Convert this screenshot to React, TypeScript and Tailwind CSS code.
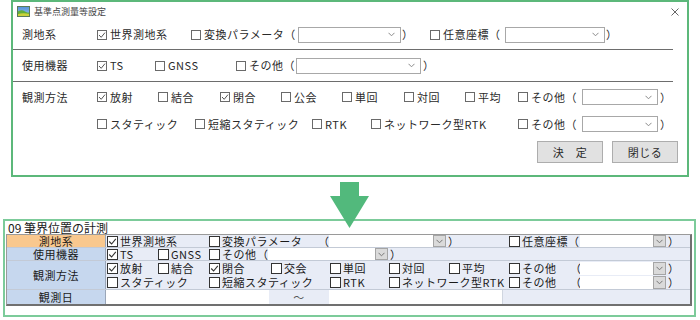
import React from "react";

function CbTop({ checked }: { checked?: boolean }) {
  return (
    <svg width="10" height="10" viewBox="0 0 10 10" className="shrink-0">
      <rect x="0.5" y="0.5" width="9" height="9" fill="#fff" stroke="#6a6a6a" />
      {checked && <path d="M2 5 L4.2 7.3 L8 2.6" fill="none" stroke="#555" strokeWidth="1" />}
    </svg>
  );
}

function CbB({ checked }: { checked?: boolean }) {
  return (
    <svg width="11" height="11" viewBox="0 0 11 11" className="shrink-0">
      <rect x="0.5" y="0.5" width="10" height="10" fill="#fff" stroke="#333" />
      {checked && <path d="M2.2 5.5 L4.6 8 L8.8 2.8" fill="none" stroke="#333" strokeWidth="1.1" />}
    </svg>
  );
}

function Chev({ color }: { color: string }) {
  return (
    <svg width="7" height="5" viewBox="0 0 7 5">
      <path d="M0.5 0.8 L3.5 3.8 L6.5 0.8" fill="none" stroke={color} strokeWidth="1" />
    </svg>
  );
}

function OptT({ checked, w, children }: { checked?: boolean; w: string; children: React.ReactNode }) {
  return (
    <div className={"flex items-center shrink-0 whitespace-nowrap " + w}>
      <CbTop checked={checked} />
      <span className="ml-[3px]">{children}</span>
    </div>
  );
}

function ComboT({ w }: { w: string }) {
  return (
    <div className={"h-[16px] shrink-0 border border-[#a8a8a8] bg-white flex items-center justify-end pr-[5px] " + w}>
      <Chev color="#8a8a8a" />
    </div>
  );
}

function OptB({ checked, w, children }: { checked?: boolean; w: string; children: React.ReactNode }) {
  return (
    <div className={"flex items-center shrink-0 whitespace-nowrap " + w}>
      <CbB checked={checked} />
      <span className="ml-[2px]">{children}</span>
    </div>
  );
}

function ComboB({ w, h }: { w: string; h: string }) {
  return (
    <>
      <div className={"bg-white shrink-0 " + w + " " + h}></div>
      <div className={"w-[13px] shrink-0 bg-[#dadada] border border-[#a5a5a5] flex items-center justify-center " + h}>
        <Chev color="#777" />
      </div>
    </>
  );
}

function AppIcon() {
  return (
    <svg width="13" height="11" viewBox="0 0 13 11">
      <defs>
        <linearGradient id="sky" x1="0" y1="0" x2="0" y2="1">
          <stop offset="0" stopColor="#4f8fd8" />
          <stop offset="1" stopColor="#9cc8f0" />
        </linearGradient>
      </defs>
      <rect x="0" y="0" width="13" height="11" fill="url(#sky)" />
      <path d="M0 6 Q4 3 8 5.5 T13 5 L13 11 L0 11 Z" fill="#5fae3a" />
      <path d="M0 8.5 Q5 6.5 13 8 L13 11 L0 11 Z" fill="#c9d23a" />
      <rect x="0.5" y="0.5" width="12" height="10" fill="none" stroke="#5a7a5a" strokeWidth="1" />
    </svg>
  );
}

export default function App() {
  return (
    <div className="w-[700px] h-[320px] bg-white overflow-hidden font-['Noto_Sans_CJK_JP',sans-serif]">
      {/* Dialog */}
      <div className="ml-[11px] w-[678px] h-[177px] border-2 border-[#5cb87a] bg-white text-[11px] tracking-[0.5px] leading-none text-[#2a2a2a]">
        <div className="h-[18px] flex items-center pl-[4px] pr-[8px]">
          <AppIcon />
          <span className="ml-[4px] text-[9px] tracking-[0px] text-[#444]">基準点測量等設定</span>
          <div className="flex-1" />
          <svg width="8" height="8" viewBox="0 0 8 8" className="mt-[2px]">
            <path d="M0.5 0.5 L7.5 7.5 M7.5 0.5 L0.5 7.5" stroke="#666" strokeWidth="1" />
          </svg>
        </div>
        {/* Row 1 */}
        <div className="h-[29px] flex items-center pl-[9px]">
          <div className="w-[75px] shrink-0">測地系</div>
          <OptT checked w="w-[94px]">世界測地系</OptT>
          <OptT w="w-[107px]">変換パラメータ（</OptT>
          <ComboT w="w-[103px]" />
          <span className="w-[29px] shrink-0 pl-[1px]">）</span>
          <OptT w="w-[75px]">任意座標（</OptT>
          <ComboT w="w-[100px]" />
          <span className="pl-[1px]">）</span>
        </div>
        <div className="h-px bg-[#6d6d6d] mr-[14px]" />
        {/* Row 2 */}
        <div className="h-[31px] flex items-center pl-[9px]">
          <div className="w-[75px] shrink-0">使用機器</div>
          <OptT checked w="w-[58px]">TS</OptT>
          <OptT w="w-[81px]">GNSS</OptT>
          <OptT w="w-[60px]">その他（</OptT>
          <ComboT w="w-[125px]" />
          <span className="pl-[2px]">）</span>
        </div>
        <div className="h-px bg-[#6d6d6d] mr-[14px]" />
        {/* Row 3 */}
        <div className="h-[30px] flex items-center pl-[9px]">
          <div className="w-[75px] shrink-0">観測方法</div>
          <OptT checked w="w-[61px]">放射</OptT>
          <OptT w="w-[62px]">結合</OptT>
          <OptT checked w="w-[61px]">閉合</OptT>
          <OptT w="w-[61px]">公会</OptT>
          <OptT w="w-[62px]">単回</OptT>
          <OptT w="w-[61px]">対回</OptT>
          <OptT w="w-[53px]">平均</OptT>
          <OptT w="w-[64px]">その他（</OptT>
          <ComboT w="w-[76px]" />
          <span className="pl-[2px]">）</span>
        </div>
        {/* Row 4 */}
        <div className="h-[24px] flex items-center pl-[84px]">
          <OptT w="w-[98px]">スタティック</OptT>
          <OptT w="w-[117px]">短縮スタティック</OptT>
          <OptT w="w-[59px]">RTK</OptT>
          <OptT w="w-[147px]">ネットワーク型RTK</OptT>
          <OptT w="w-[64px]">その他（</OptT>
          <ComboT w="w-[76px]" />
          <span className="pl-[2px]">）</span>
        </div>
        {/* Buttons */}
        <div className="mt-[5px] flex justify-end gap-[9px] pr-[9px]">
          <div className="w-[66px] h-[22px] bg-[#e1e1e1] border border-[#adadad] flex items-center justify-center">決　定</div>
          <div className="w-[66px] h-[22px] bg-[#e1e1e1] border border-[#adadad] flex items-center justify-center">閉じる</div>
        </div>
      </div>

      {/* Arrow */}
      <div className="h-[42px] flex justify-center relative z-10">
        <svg width="40" height="46" viewBox="0 0 40 46" className="mt-[5px] shrink-0 overflow-visible">
          <path d="M10 0 L29 0 L29 14 L39 14 L19.5 46 L0 14 L10 14 Z" fill="#52b97c" />
        </svg>
      </div>

      {/* Bottom frame */}
      <div className="ml-[3px] w-[693px] h-[98px] border-2 border-[#7ccb9a] bg-white pl-px text-[11px] tracking-[0.5px] leading-none text-[#1a1a1a]">
        <div className="h-[13px] flex items-center pl-[2px] text-[12px] tracking-[0px]">09 筆界位置の計測</div>
        <div className="w-[686px] border-t border-l border-[#9a9a9a] border-r-2 border-r-[#707070] border-b-2 border-b-[#707070]">
          {/* r1 */}
          <div className="h-[13px] flex border-b border-[#c3cad6]">
            <div className="w-[99px] shrink-0 bg-[#f9c88e] border-r border-[#9aa6b8] flex items-center justify-center">測地系</div>
            <div className="flex-1 bg-[#e8ecf6] flex items-center pl-px">
              <OptB checked w="w-[102px]">世界測地系</OptB>
              <OptB w="w-[109px]">変換パラメータ</OptB>
              <span className="w-[11px] shrink-0">（</span>
              <ComboB w="w-[104px]" h="h-[12px]" />
              <span className="w-[63px] shrink-0 pl-[2px]">）</span>
              <OptB w="w-[59px]">任意座標</OptB>
              <span className="w-[12px] shrink-0">（</span>
              <ComboB w="w-[73px]" h="h-[12px]" />
              <span className="pl-[2px]">）</span>
            </div>
          </div>
          {/* r2 */}
          <div className="h-[13px] flex border-b border-[#c3cad6]">
            <div className="w-[99px] shrink-0 bg-[#c6d7ee] border-r border-[#9aa6b8] flex items-center justify-center">使用機器</div>
            <div className="flex-1 bg-[#e8ecf6] flex items-center pl-px">
              <OptB checked w="w-[51px]">TS</OptB>
              <OptB w="w-[51px]">GNSS</OptB>
              <OptB w="w-[48px]">その他</OptB>
              <span className="w-[11px] shrink-0">（</span>
              <ComboB w="w-[107px]" h="h-[12px]" />
              <span className="pl-[2px]">）</span>
            </div>
          </div>
          {/* r3 */}
          <div className="h-[29px] flex border-b border-[#c3cad6]">
            <div className="w-[99px] shrink-0 bg-[#c6d7ee] border-r border-[#9aa6b8] flex items-center justify-center">観測方法</div>
            <div className="flex-1 bg-[#e8ecf6] flex flex-col pl-px">
              <div className="h-[14px] flex items-center">
                <OptB checked w="w-[51px]">放射</OptB>
                <OptB w="w-[51px]">結合</OptB>
                <OptB checked w="w-[62px]">閉合</OptB>
                <OptB w="w-[59px]">交会</OptB>
                <OptB w="w-[59px]">単回</OptB>
                <OptB w="w-[60px]">対回</OptB>
                <OptB w="w-[60px]">平均</OptB>
                <OptB w="w-[61px]">その他</OptB>
                <span className="w-[10px] shrink-0">（</span>
                <ComboB w="w-[73px]" h="h-[13px]" />
                <span className="pl-[2px]">）</span>
              </div>
              <div className="h-[14px] flex items-center">
                <OptB w="w-[102px]">スタティック</OptB>
                <OptB w="w-[121px]">短縮スタティック</OptB>
                <OptB w="w-[59px]">RTK</OptB>
                <OptB w="w-[120px]">ネットワーク型RTK</OptB>
                <OptB w="w-[61px]">その他</OptB>
                <span className="w-[10px] shrink-0">（</span>
                <ComboB w="w-[73px]" h="h-[13px]" />
                <span className="pl-[2px]">）</span>
              </div>
            </div>
          </div>
          {/* r4 */}
          <div className="h-[14px] flex">
            <div className="w-[99px] shrink-0 bg-[#c6d7ee] border-r border-[#9aa6b8] flex items-center justify-center">観測日</div>
            <div className="flex-1 bg-[#e8ecf6] flex">
              <div className="w-[163px] shrink-0 bg-white"></div>
              <div className="w-[60px] shrink-0 flex items-center justify-center text-[#555]">～</div>
              <div className="w-[174px] shrink-0 bg-white border-r border-[#d0d6e0]"></div>
            </div>
          </div>
        </div>
      </div>
    </div>
  );
}
